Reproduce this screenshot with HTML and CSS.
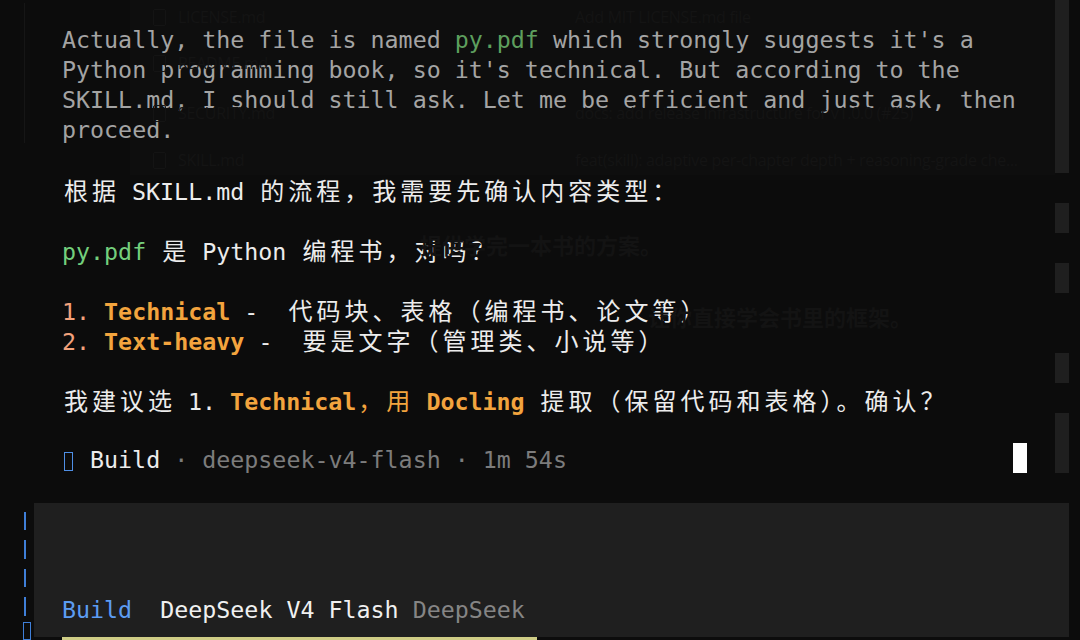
FILE: index.html
```html
<!DOCTYPE html>
<html lang="zh-CN">
<head>
<meta charset="utf-8">
<title>Terminal</title>
<link rel="stylesheet" href="styles.css">
</head>
<body>
<div class="screen">
  <div class="top">
    <div class="term">
      <div class="row dim">Actually, the file is named <span class="g1">py.pdf</span> which strongly suggests it's a</div>
      <div class="row dim">Python programming book, so it's technical. But according to the</div>
      <div class="row dim">SKILL.md, I should still ask. Let me be efficient and just ask, then</div>
      <div class="row dim">proceed.</div>
      <div class="row"></div>
      <div class="row"><span class="c">根据</span> SKILL.md <span class="c">的流程，我需要先确认内容类型：</span></div>
      <div class="row"></div>
      <div class="row"><span class="g2">py.pdf</span> <span class="c">是</span> Python <span class="c">编程书，对吗？</span></div>
      <div class="row"></div>
      <div class="row"><span class="num">1.</span> <b class="or">Technical</b> -  <span class="c">代码块、表格（编程书、论文等）</span></div>
      <div class="row"><span class="num">2.</span> <b class="or">Text-heavy</b> -  <span class="c">要是文字（管理类、小说等）</span></div>
      <div class="row"></div>
      <div class="row"><span class="c">我建议选</span> 1. <b class="or">Technical</b><span class="c or">，用</span> <b class="or">Docling</b> <span class="c">提取（保留代码和表格）。确认？</span></div>
      <div class="row"></div>
      <div class="row status">
        <span><span class="box"></span> Build <span class="meta">· deepseek-v4-flash · 1m 54s</span></span>
        <span class="cursor"></span>
      </div>
    </div>
    <div class="scroll">
      <div class="seg s1"></div>
      <div class="seg s2"></div>
      <div class="seg s3"></div>
      <div class="seg s4"></div>
      <div class="seg s5"></div>
    </div>
  </div>
  <div class="bottom">
    <div class="gutter">
      <div class="dash"></div>
      <div class="dash"></div>
      <div class="dash"></div>
      <div class="dash"></div>
      <div class="gbox"></div>
    </div>
    <div class="input">
      <div class="row"><span class="mode">Build</span>  <span class="model">DeepSeek V4 Flash</span> <span class="prov">DeepSeek</span></div>
    </div>
  </div>

  <div class="ghost">
    <div class="gpanel"></div>
    <div class="gline"></div>
    <div class="gfile f1"><span class="gicon"></span>LICENSE.md</div>
    <div class="gfile f2"><span class="gicon"></span>README.md</div>
    <div class="gfile f3"><span class="gicon"></span>SECURITY.md</div>
    <div class="gfile f4"><span class="gicon"></span>SKILL.md</div>
    <div class="gmsg m1">Add MIT LICENSE.md file</div>
    <div class="gmsg m3">docs: add release infrastructure for v1.0.0 (#25)</div>
    <div class="gmsg m4">feat(skill): adaptive per-chapter depth + reasoning-grade che...</div>
    <div class="gcn z1">提供学完一本书的方案。</div>
    <div class="gcn z2">让你直接学会书里的框架。</div>
    <div class="gbig">你自己的 Skill 文件。</div>
    <div class="gyellow"></div>
  </div>
</div>
</body>
</html>
```

FILE: styles.css
```css
* { box-sizing: border-box; }

html, body {
  margin: 0;
  padding: 0;
  background: #0c0c0c;
}

.screen {
  position: relative;
  width: 1080px;
  height: 640px;
  overflow: hidden;
  background: #0c0c0c;
  font-family: "DejaVu Sans Mono", "Noto Sans CJK SC", monospace;
  font-size: 23.3px;
  color: #ececec;
}

.top {
  display: flex;
  height: 503px;
}

.term {
  width: 1055px;
  padding: 23px 0 0 62px;
}

.row {
  height: 30px;
  line-height: 34px;
  white-space: pre;
}

.c {
  font-family: "Noto Sans CJK SC", sans-serif;
  font-size: 24px;
  letter-spacing: 4px;
  padding-left: 2px;
  margin-right: -2px;
}

.dim { color: #a3a3a3; }
.g1 { color: #5c9e5c; }
.g2 { color: #74cf7c; }
.num { color: #f2a27c; }
.or { color: #f3a43e; }
b.or { font-weight: bold; }

.status {
  display: flex;
  justify-content: space-between;
  padding-right: 28px;
}

.box {
  display: inline-block;
  width: 9px;
  height: 19px;
  border: 1.5px solid #4f8fe6;
  margin-left: 2px;
  margin-right: 3px;
  vertical-align: -3px;
}

.meta { color: #7c7c7c; }

.cursor {
  display: block;
  width: 14px;
  height: 30px;
  background: #ffffff;
}

.scroll {
  width: 14px;
  display: flex;
  flex-direction: column;
}

.seg { background: #1f1f1f; }
.s1 { height: 173px; }
.s2 { height: 30px; margin-top: 30px; }
.s3 { height: 30px; margin-top: 30px; }
.s4 { height: 30px; margin-top: 60px; }
.s5 { height: 60px; margin-top: 30px; }

.bottom {
  display: flex;
  height: 137px;
}

.gutter {
  width: 34px;
  padding: 9px 0 0 23px;
  display: flex;
  flex-direction: column;
  gap: 10px;
}

.dash {
  width: 2px;
  height: 20px;
  margin-left: 1px;
  background: #3f7fd8;
}

.gbox {
  width: 8px;
  height: 20px;
  margin-top: -4px;
  border: 1.5px solid #3f7fd8;
}

.input {
  width: 1035px;
  height: 134px;
  background: #1f1f1f;
  padding: 90px 0 0 28px;
}

.mode { color: #5c9cf2; }
.model { color: #f0f0f0; }
.prov { color: #858585; }

/* faint after-image of another window */
.ghost {
  position: absolute;
  inset: 0;
  pointer-events: none;
  font-family: "Open Sans", "Noto Sans CJK SC", sans-serif;
}

.gpanel {
  position: absolute;
  left: 130px;
  top: 0;
  width: 925px;
  height: 175px;
  background: rgba(255, 255, 255, 0.01);
}

.gline {
  position: absolute;
  left: 24px;
  top: 3px;
  width: 1px;
  height: 140px;
  background: #161616;
}

.gfile {
  position: absolute;
  left: 153px;
  display: flex;
  align-items: center;
  gap: 12px;
  font-size: 16px;
  color: #141414;
  letter-spacing: -0.3px;
}

.gicon {
  width: 13px;
  height: 17px;
  border: 1.5px solid #141414;
  border-radius: 2px;
}

.f1 { top: 6px; }
.f2 { top: 52px; }
.f3 { top: 102px; }
.f4 { top: 149px; }

.gmsg {
  position: absolute;
  left: 575px;
  font-size: 16px;
  color: #141414;
  letter-spacing: -0.3px;
  white-space: nowrap;
}

.m1 { top: 6px; }
.m3 { top: 102px; }
.m4 { top: 149px; }

.gcn {
  position: absolute;
  font-size: 22px;
  font-weight: bold;
  color: #131313;
  white-space: nowrap;
}

.z1 { left: 420px; top: 228px; }
.z2 { left: 648px; top: 300px; }

.gbig {
  position: absolute;
  left: 130px;
  top: 588px;
  font-size: 42px;
  font-weight: bold;
  color: rgba(255, 255, 255, 0.025);
  white-space: nowrap;
}

.gyellow {
  position: absolute;
  left: 62px;
  top: 637px;
  width: 475px;
  height: 3px;
  background: #cfcd86;
}
```
